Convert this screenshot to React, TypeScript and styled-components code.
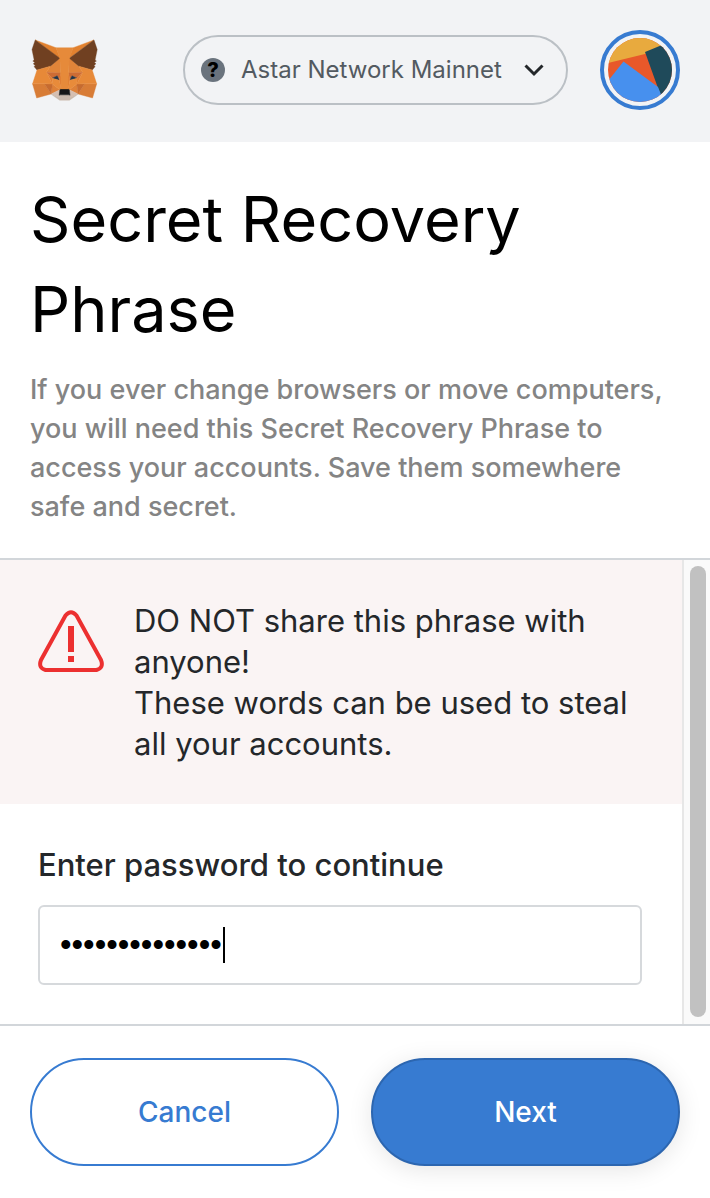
import React, { useState } from "react";
import styled, { createGlobalStyle, css } from "styled-components";

const GlobalStyle = createGlobalStyle`
  *, *::before, *::after { box-sizing: border-box; }
  body {
    margin: 0;
    background: #ffffff;
    color: #24272a;
    font-family: Inter, "Liberation Sans", sans-serif;
  }
  button, input { font: inherit; }
`;

const Page = styled.div`
  display: flex;
  flex-direction: column;
  min-height: 100vh;
`;

const Header = styled.header`
  display: flex;
  align-items: center;
  justify-content: space-between;
  gap: 32px;
  padding: 30px 30px 32px;
  background: #f2f3f5;
`;

const Logo = styled.svg`
  display: block;
  width: 68px;
  height: 64px;
  flex: none;
`;

const HeaderActions = styled.div`
  display: flex;
  align-items: center;
  gap: 32px;
`;

const NetworkButton = styled.button`
  display: flex;
  align-items: center;
  gap: 16px;
  width: 385px;
  height: 70px;
  padding: 0 21px 0 16px;
  border: 2px solid #bbc0c5;
  border-radius: 35px;
  background: transparent;
  color: #535a61;
  font-size: 24px;
  line-height: 34px;
  white-space: nowrap;
  cursor: pointer;
`;

const NetworkName = styled.span`
  flex: 1;
  text-align: left;
`;

const NetworkMark = styled.span`
  display: flex;
  align-items: center;
  justify-content: center;
  width: 24px;
  height: 24px;
  border-radius: 50%;
  background: #6a737d;
  color: #000000;
  font-size: 20px;
  font-weight: 800;
  line-height: 24px;
`;

const AccountButton = styled.button`
  display: block;
  width: 80px;
  height: 80px;
  padding: 4px;
  border: 4px solid #377bd1;
  border-radius: 50%;
  background: transparent;
  cursor: pointer;

  svg {
    display: block;
    width: 64px;
    height: 64px;
    border-radius: 50%;
  }
`;

const Intro = styled.section`
  padding: 32px 30px;
`;

const Title = styled.h1`
  margin: 0 0 16px;
  color: #000000;
  font-size: 63px;
  font-weight: 400;
  line-height: 90px;
`;

const Lead = styled.p`
  margin: 0;
  color: #848484;
  font-size: 27px;
  font-weight: 500;
  line-height: 39px;
`;

const ScrollArea = styled.main`
  display: flex;
  flex: 1;
  border-top: 2px solid #d2d6da;
  border-bottom: 2px solid #d2d6da;
`;

const ScrollContent = styled.div`
  flex: 1;
  min-width: 0;
`;

const ScrollTrack = styled.div`
  display: flex;
  width: 28px;
  padding: 6px 4px 7px 6px;
  border-left: 2px solid #e7e7e7;
  background: #fafafa;
`;

const ScrollThumb = styled.div`
  flex: 1;
  border-radius: 8px;
  background: #c1c1c1;
`;

const Warning = styled.div`
  display: flex;
  align-items: flex-start;
  gap: 30px;
  padding: 40px 38px;
  background: #faf4f4;
  font-size: 31px;
  line-height: 41px;
`;

const WarningIcon = styled.svg`
  display: block;
  width: 66px;
  height: 62px;
  margin-top: 10px;
  flex: none;
`;

const WarningText = styled.p`
  margin: 0;
`;

const PasswordForm = styled.form`
  display: flex;
  flex-direction: column;
  gap: 20px;
  padding: 41px 40px 39px 38px;
`;

const Label = styled.label`
  font-size: 31px;
  font-weight: 500;
  line-height: 40px;
`;

const Field = styled.div`
  position: relative;
`;

const PasswordInput = styled.input`
  display: block;
  width: 100%;
  height: 80px;
  padding: 0 20px;
  border: 2px solid #d6d9dc;
  border-radius: 6px;
  outline: none;
  background: #ffffff;
  color: #000000;
  font-family: "Liberation Sans", sans-serif;
  font-size: 33px;
  caret-color: transparent;
`;

const Caret = styled.span`
  position: absolute;
  top: 22px;
  left: 185px;
  width: 2px;
  height: 36px;
  background: #000000;
  pointer-events: none;
`;

const Footer = styled.footer`
  display: flex;
  gap: 32px;
  padding: 32px 30px;
`;

const ActionButton = styled.button<{ $primary?: boolean }>`
  flex: 1;
  height: 108px;
  border: 2px solid #377bd1;
  border-radius: 54px;
  background: #ffffff;
  color: #377bd1;
  font-size: 28px;
  font-weight: 500;
  cursor: pointer;

  ${({ $primary }) =>
    $primary &&
    css`
      border-color: #2c66b0;
      background: #377bd1;
      color: #ffffff;
      box-shadow: 0 4px 24px rgba(0, 0, 0, 0.1);
    `}
`;

const foxShapes: [string, string][] = [
  ["#e2812f", "M32.958 1L19.825 10.718l2.442-5.728zM2.663 1l13.017 9.809-2.325-5.82z"],
  ["#d87c36", "M28.23 23.533l-3.495 5.338 7.483 2.06 2.143-7.282zM1.273 23.65l2.13 7.282 7.47-2.06-3.482-5.339z"],
  ["#e18439", "M10.474 14.515l-2.079 3.136 7.405.337-.247-7.969zM25.147 14.515l-5.157-4.587-.169 8.06 7.405-.337z"],
  ["#de8037", "M10.873 28.872l4.482-2.164-3.859-3.006zM20.266 26.708l4.469 2.164-.61-5.17z"],
  ["#d5bfb2", "M24.735 28.872l-4.469-2.164.364 2.903-.039 1.232zM10.873 28.872l4.157 1.97-.026-1.231.351-2.903z"],
  ["#c66b30", "M10.873 28.872l.65-5.339-4.131.117zM24.098 23.533l.637 5.339 3.494-5.222z"],
  ["#cd6c34", "M27.228 17.651l-7.405.337.688 3.797 1.091-2.294 2.638 1.205zM11.392 20.695l2.624-1.205 1.091 2.294.689-3.797-7.405-.336z"],
  ["#233447", "M15.108 21.784l-3.716-1.089 2.624-1.205zM20.514 21.784l1.091-2.294 2.638 1.205z"],
  ["#df7c33", "M8.392 17.651l3.104 6.052-.104-3.007zM24.24 20.695l-.117 3.007 3.105-6.052zM15.796 17.988l-.689 3.797.87 4.484.195-5.91zM19.823 17.988l-.364 2.359.182 5.922.87-4.484z"],
  ["#e88b3a", "M20.514 21.784l-.87 4.484.623.44 3.858-3.006.117-3.007zM11.392 20.695l.104 3.007 3.859 3.006.623-.44-.87-4.484z"],
  ["#c9b8ab", "M20.591 30.842l.039-1.231-.338-.285h-4.963l-.325.285.026 1.231-4.157-1.97 1.455 1.192 2.949 2.036h5.054l2.962-2.036 1.442-1.192z"],
  ["#161616", "M20.266 26.708l-.623-.44h-3.664l-.623.44-.351 2.903.325-.285h4.963l.338.285z"],
  ["#704021", "M33.517 11.353l1.104-5.364L32.958 1l-12.692 9.394 4.885 4.121 6.898 2.01 1.52-1.776-.663-.48 1.053-.958-.806-.622 1.052-.804zM1 5.989l1.117 5.364-.715.531 1.065.804-.806.622 1.052.959-.662.479 1.52 1.776 6.899-2.01 4.884-4.12L2.663 1z"],
  ["#e78938", "M32.048 16.525l-6.898-2.01 2.078 3.136-3.105 6.052 4.106-.052h6.131zM10.474 14.515l-6.899 2.01-2.3 7.125h6.119l4.105.052-3.104-6.051z"],
  ["#e68a3a", "M19.823 17.988l.442-7.592 2-5.405h-8.911l2 5.405.442 7.592.169 2.385.013 5.896h3.664l.013-5.896z"],
];

export default function App() {
  const [password, setPassword] = useState("correcthorse12");

  return (
    <Page>
      <GlobalStyle />
      <Header>
        <Logo viewBox="0 0 35 33" role="img" aria-label="MetaMask">
          {foxShapes.map(([fill, d]) => (
            <path key={d} d={d} fill={fill} stroke={fill} strokeWidth="0.2" strokeLinejoin="round" />
          ))}
        </Logo>
        <HeaderActions>
          <NetworkButton type="button">
            <NetworkMark>?</NetworkMark>
            <NetworkName>Astar Network Mainnet</NetworkName>
            <svg width="22" height="14" viewBox="0 0 22 14" aria-hidden="true">
              <path d="M2.5 2.5 11 11l8.500-8.500" fill="none" stroke="#24272a" strokeWidth="3" />
            </svg>
          </NetworkButton>
          <AccountButton type="button" aria-label="Account">
            <svg viewBox="0 0 64 64" aria-hidden="true">
              <rect width="64" height="64" fill="#e8582a" />
              <path d="M0 0H64V4L37 16 0 25Z" fill="#e8aa3e" />
              <path d="M37 14 54 7 64 0V64H55Z" fill="#1f4a5a" />
              <path d="M15.500 23.500 50 49 56 64H0V43Z" fill="#4790ee" />
            </svg>
          </AccountButton>
        </HeaderActions>
      </Header>
      <Intro>
        <Title>Secret Recovery Phrase</Title>
        <Lead>
          If you ever change browsers or move computers, you will need this Secret Recovery
          Phrase to access your accounts. Save them somewhere safe and secret.
        </Lead>
      </Intro>
      <ScrollArea>
        <ScrollContent>
          <Warning>
            <WarningIcon viewBox="0 0 66 62" aria-hidden="true">
              <path
                d="M27.500 5.500Q33-1 38.500 5.500L63 50Q66 58 58.500 60H7.500Q0 58 3 50Z"
                fill="none"
                stroke="#ec3030"
                strokeWidth="4"
                strokeLinejoin="round"
              />
              <path d="M30 16h6v26h-6zM30 46h6v6h-6z" fill="#ec3030" />
            </WarningIcon>
            <WarningText>
              DO NOT share this phrase with anyone!
              <br />
              These words can be used to steal all your accounts.
            </WarningText>
          </Warning>
          <PasswordForm id="reveal" onSubmit={(e) => e.preventDefault()}>
            <Label htmlFor="password">Enter password to continue</Label>
            <Field>
              <PasswordInput
                id="password"
                type="password"
                value={password}
                onChange={(e) => setPassword(e.target.value)}
              />
              <Caret />
            </Field>
          </PasswordForm>
        </ScrollContent>
        <ScrollTrack aria-hidden="true">
          <ScrollThumb />
        </ScrollTrack>
      </ScrollArea>
      <Footer>
        <ActionButton type="button">Cancel</ActionButton>
        <ActionButton type="submit" form="reveal" $primary>
          Next
        </ActionButton>
      </Footer>
    </Page>
  );
}
